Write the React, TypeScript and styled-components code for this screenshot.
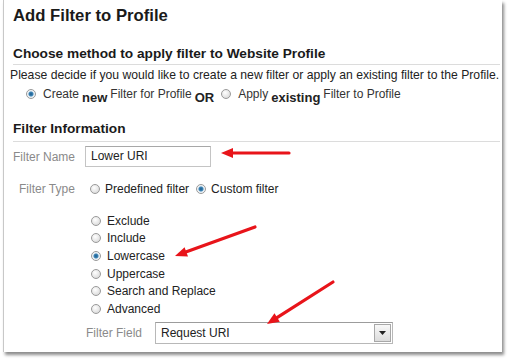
import React from 'react';
import styled, {createGlobalStyle} from 'styled-components';

const GlobalStyle = createGlobalStyle`
  html, body {
    margin: 0;
    padding: 0;
    background: #ffffff;
  }
  body {
    font-family: "Liberation Sans", Arial, sans-serif;
    color: #222;
  }
`;

const Page = styled.div`
  width: 508px;
  height: 362px;
  padding: 0 0 0 3px;
  box-sizing: border-box;
`;

const Panel = styled.div`
  position: relative;
  width: 499px;
  height: 352px;
  background: #ffffff;
  border-left: 1px solid #c8c8c8;
  box-shadow: 2px 3px 3px rgba(0, 0, 0, 0.45);
  box-sizing: border-box;
  padding: 6px 0 0 9px;
`;

const Title = styled.h1`
  margin: 0;
  font-size: 16.7px;
  font-weight: bold;
  line-height: 20px;
  color: #1a1a1a;
`;

const SectionHead = styled.h2<{$top: number; $pad: number}>`
  margin: ${p => p.$top}px 2px 0 0;
  padding-bottom: ${p => p.$pad}px;
  font-size: 13.7px;
  font-weight: bold;
  line-height: 18px;
  color: #1a1a1a;
  border-bottom: 1px solid #dcdcdc;
`;

const Note = styled.div`
  margin: 2px 0 0 -3px;
  font-size: 12.2px;
  line-height: 16px;
  color: #222;
`;

const MethodRow = styled.div`
  display: flex;
  align-items: center;
  gap: 3px;
  height: 18px;
  margin: 2px 0 0 13px;
  font-size: 12px;
  color: #333;
`;

const Strong = styled.b`
  font-size: 13px;
  position: relative;
  top: 3px;
  color: #222;
`;

const Radio = styled.span<{$on?: boolean; $space?: number}>`
  display: inline-block;
  width: 10px;
  height: 10px;
  border-radius: 50%;
  border: 1px solid #9a9a9a;
  box-sizing: border-box;
  background: ${p =>
    p.$on
      ? 'radial-gradient(circle, #1d5a8a 0, #3d86b8 2px, #e8eef3 3px, #ffffff 5px)'
      : 'radial-gradient(circle at 40% 35%, #ffffff 0, #e4e4e4 60%, #cfcfcf 100%)'};
  flex: none;
  margin-right: ${p => p.$space ?? 4}px;
`;

const Spacer = styled.span<{$w: number}>`
  display: inline-block;
  width: ${p => p.$w}px;
`;

const FieldRow = styled.div<{$top: number; $indent: number}>`
  display: flex;
  align-items: center;
  margin: ${p => p.$top}px 0 0 ${p => p.$indent}px;
  font-size: 12px;
  line-height: 16px;
  color: #333;
`;

const Label = styled.span<{$w: number}>`
  width: ${p => p.$w}px;
  color: #8a8a8a;
  font-size: 12px;
  flex: none;
`;

const TextBox = styled.div`
  width: 126px;
  height: 21px;
  box-sizing: border-box;
  border: 1px solid #c4c4c4;
  border-top-color: #a8a8a8;
  padding: 0 5px;
  font-size: 12px;
  line-height: 19px;
  color: #222;
`;

const Choice = styled.label`
  display: inline-flex;
  align-items: center;
  gap: 2px;
  font-size: 12px;
  color: #222;
  margin-right: 7px;
`;

const RadioList = styled.div`
  display: flex;
  flex-direction: column;
  margin: 15px 0 0 78px;
`;

const ListItem = styled.label`
  display: flex;
  align-items: center;
  gap: 2px;
  height: 17.6px;
  font-size: 12px;
  color: #222;
`;

const Select = styled.div`
  display: flex;
  width: 238px;
  height: 22px;
  box-sizing: border-box;
  border: 1px solid #b8b8b8;
  border-top-color: #9c9c9c;
`;

const SelectText = styled.div`
  flex: 1;
  padding: 0 5px;
  font-size: 12px;
  line-height: 20px;
  color: #222;
`;

const SelectButton = styled.div`
  width: 15px;
  margin: 1px;
  border: 1px solid #a8a8a8;
  background: linear-gradient(#f8f8f8, #dcdcdc);
  display: flex;
  align-items: center;
  justify-content: center;
`;

const Arrows = styled.svg`
  position: absolute;
  left: -4px;
  top: 0;
  pointer-events: none;
`;

const Arrow: React.FC<{x1: number; y1: number; x2: number; y2: number}> = ({x1, y1, x2, y2}) => {
  const a = Math.atan2(y2 - y1, x2 - x1);
  const len = 12;
  const w = 5;
  const bx = x2 - Math.cos(a) * len;
  const by = y2 - Math.sin(a) * len;
  const px = -Math.sin(a) * w;
  const py = Math.cos(a) * w;
  return (
    <g>
      <line x1={x1} y1={y1} x2={bx + Math.cos(a) * 2} y2={by + Math.sin(a) * 2} stroke="#e8141a" strokeWidth={3.2} strokeLinecap="round" />
      <polygon points={`${x2},${y2} ${bx + px},${by + py} ${bx - px},${by - py}`} fill="#e8141a" />
    </g>
  );
};

export default function App() {
  const kinds = ['Exclude', 'Include', 'Lowercase', 'Uppercase', 'Search and Replace', 'Advanced'];
  return (
    <Page>
      <GlobalStyle />
      <Panel>
        <Title>Add Filter to Profile</Title>
        <SectionHead $top={19} $pad={1}>Choose method to apply filter to Website Profile</SectionHead>
        <Note>Please decide if you would like to create a new filter or apply an existing filter to the Profile.</Note>
        <MethodRow>
          <Radio $on />
          <span>Create</span>
          <Strong>new</Strong>
          <span>Filter for Profile</span>
          <Strong>OR</Strong>
          <Spacer $w={1} />
          <Radio />
          <span>Apply</span>
          <Strong>existing</Strong>
          <span>Filter to Profile</span>
        </MethodRow>
        <SectionHead $top={17} $pad={3}>Filter Information</SectionHead>
        <FieldRow $top={4} $indent={0}>
          <Label $w={72}>Filter Name</Label>
          <TextBox>Lower URI</TextBox>
        </FieldRow>
        <FieldRow $top={14} $indent={6}>
          <Label $w={71}>Filter Type</Label>
          <Choice><Radio $space={3} />Predefined filter</Choice>
          <Choice><Radio $on $space={3} />Custom filter</Choice>
        </FieldRow>
        <RadioList>
          {kinds.map(k => (
            <ListItem key={k}>
              <Radio $on={k === 'Lowercase'} $space={4} />
              {k}
            </ListItem>
          ))}
        </RadioList>
        <FieldRow $top={4} $indent={73}>
          <Label $w={69}>Filter Field</Label>
          <Select>
            <SelectText>Request URI</SelectText>
            <SelectButton>
              <svg width="7" height="4" viewBox="0 0 7 4"><path d="M0 0 H7 L3.5 4 Z" fill="#222" /></svg>
            </SelectButton>
          </Select>
        </FieldRow>
        <Arrows width="508" height="362">
          <Arrow x1={289} y1={153} x2={221} y2={153} />
          <Arrow x1={255} y1={227} x2={175} y2={256} />
          <Arrow x1={333} y1={282} x2={267} y2={324} />
        </Arrows>
      </Panel>
    </Page>
  );
}
